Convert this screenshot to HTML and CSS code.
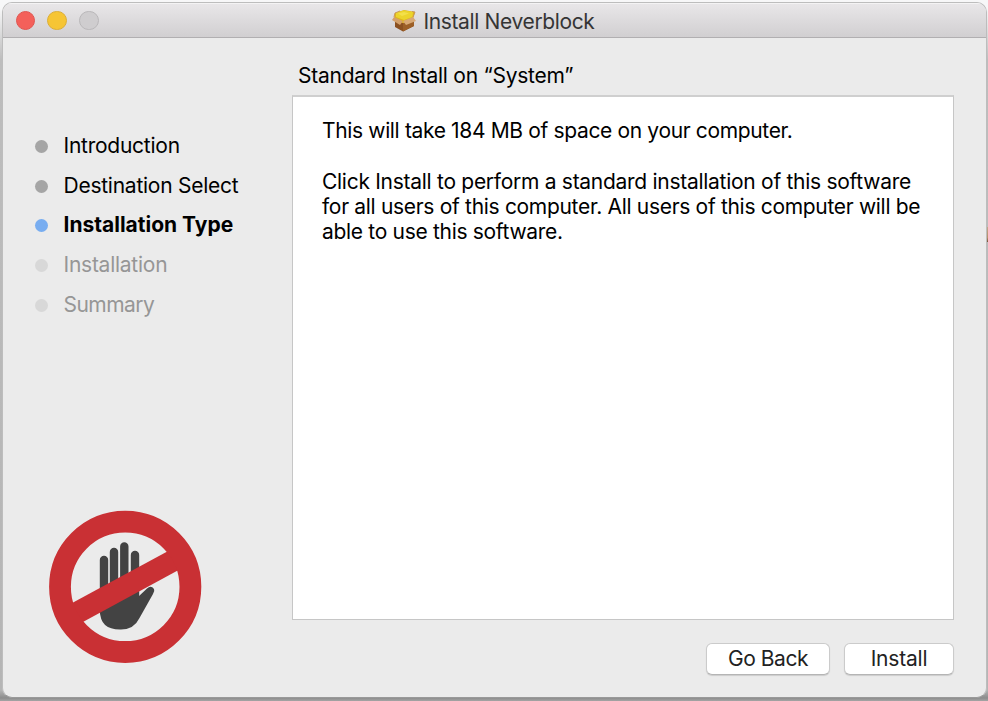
FILE: index.html
```html
<!DOCTYPE html>
<html lang="en">
<head>
<meta charset="utf-8">
<title>Install Neverblock</title>
<link rel="stylesheet" href="styles.css">
</head>
<body>
<main class="window">
  <header class="titlebar">
    <div class="lights"><i class="light close"></i><i class="light minimize"></i><i class="light disabled"></i></div>
    <h1 class="title">
      <svg class="package" width="24" height="23" viewBox="0 0 24 23">
        <path d="M3 11 12 14 22 10V17L11 22.500 3 18Z" fill="#8b5020"/>
        <path d="M11 14 22 10V17L11 22.500Z" fill="#9c5f27"/>
        <path d="M3 4 12 1 23 3 21 10 11 14 2 10Z" fill="#dfb519"/>
        <path d="M4 3.500 12 1.500 21 3 20.500 8 12 11 4 8Z" fill="#ecd42c"/>
        <path d="M6 4.500 12 3 17 4.500 10 7Z" fill="#f3e04a"/>
        <path d="M2 8 11 12 8 16 0 11Z" fill="#d3a06a"/>
        <path d="M11 12 21 8 24 12 14 16Z" fill="#d8a875"/>
        <path d="M21 8 23 3 20 2.500M2 8 3 4 8 2" fill="none" stroke="#c9985b"/>
      </svg>
      <span>Install Neverblock</span>
    </h1>
  </header>
  <div class="content">
    <aside class="sidebar">
      <ol class="steps">
        <li class="done"><span>Introduction</span></li>
        <li class="done"><span>Destination Select</span></li>
        <li class="current"><span>Installation Type</span></li>
        <li class="pending"><span>Installation</span></li>
        <li class="pending summary"><span>Summary</span></li>
      </ol>
      <svg class="logo" width="154" height="154" viewBox="48 510 154 154">
        <g stroke="#434343" stroke-width="8.400" stroke-linecap="round" fill="none">
          <path d="M104 560V612M114 552V608M124.300 546.500V608M135 555V608"/>
        </g>
        <path d="M100 592H138V597L147 588.500Q151 585 154 589Q155 591 153 594L139.500 618Q134 629.500 121 629.500Q100 630 100 611Z" fill="#434343"/>
        <path d="M69 617.100 184 554.700" stroke="#c93034" stroke-width="21.700"/>
        <circle cx="125.200" cy="586.800" r="65.200" fill="none" stroke="#c93034" stroke-width="21.800"/>
      </svg>
    </aside>
    <section class="main">
      <h2 class="heading">Standard Install on “System”</h2>
      <div class="panel">
        <p class="size">This will take 184 MB of space on your computer.</p>
        <p><span class="line1">Click Install to perform a standard installation of this software</span><br><span class="line2">for all users of this computer. All users of this computer will be</span><br><span class="line3">able to use this software.</span></p>
      </div>
      <footer class="actions">
        <button class="back">Go Back</button>
        <button class="install">Install</button>
      </footer>
    </section>
  </div>
</main>
</body>
</html>
```

FILE: styles.css
```css
* { box-sizing: border-box; }
body {
  margin: 0;
  height: 701px;
  padding: 2px 1px 3px 2px;
  overflow: hidden;
  background:
    linear-gradient(#c0a58a, #b58f6c 70%, #75543b) right 227px / 2px 15px no-repeat,
    linear-gradient(#f7f7f8 0, #f7f7f8 8px, #bdbdbd 60px, #b5b5b5 690px, #8c8c8c 698px, #a5a5a5 701px);
  font-family: Inter, "Liberation Sans", sans-serif;
  font-size: 21px;
  letter-spacing: -0.25px;
  color: #000;
}
.window {
  height: 696px;
  border: 1px solid #bdbdbd;
  border-bottom-color: #999;
  border-radius: 10px;
  background: #ebebeb;
  overflow: hidden;
  display: flex;
  flex-direction: column;
}
.titlebar {
  height: 35px;
  flex: none;
  border-bottom: 1px solid #b1afb1;
  background: linear-gradient(#e9e7e9, #d1cfd1);
  box-shadow: inset 0 1px #f4f3f4;
  display: grid;
  grid-template-columns: 1fr auto 1fr;
  align-items: center;
}
.lights { display: flex; gap: 12.300px; padding: 1px 0 0 12.500px; }
.light { width: 19.500px; height: 19.500px; border-radius: 50%; border: 1px solid; }
.close { background: #f4605a; border-color: #df5651; }
.minimize { background: #f6c534; border-color: #dcae37; }
.disabled { background: #cfcdcf; border-color: #b9b7b9; }
.title { display: flex; align-items: center; gap: 7px; margin: 2px 2px 0 0; font-size: 21px; font-weight: 400; letter-spacing: -0.36px; color: #353535; }
.package { display: block; margin-top: -1px; }
.content { flex: 1; display: flex; }
.sidebar {
  width: 289px;
  flex: none;
  display: flex;
  flex-direction: column;
  justify-content: space-between;
  padding: 87px 0 33px 32px;
}
.steps { list-style: none; margin: 0; padding: 0; }
.steps li { display: flex; align-items: center; height: 39.700px; }
.steps li::before { content: ""; width: 13px; height: 13px; margin: 3px 15.500px 0 0; border-radius: 50%; background: #a5a5a5; }
.steps span { padding-top: 1px; }
.steps .current { font-weight: 700; letter-spacing: 0; }
.steps .current::before { background: #78adf0; }
.steps .pending { color: #969696; }
.steps .pending::before { background: #d8d8d8; }
.steps .summary { letter-spacing: -0.55px; }
.logo { margin-left: 13px; }
.main { flex: 1; padding: 21px 32px 0 0; }
.heading { margin: 0 0 2px 6px; height: 34px; line-height: 34px; font-size: 21px; font-weight: 400; }
.panel { height: 525px; padding: 21px 29px; background: #fff; border: 1px solid #c6c6c6; border-width: 2px 1px 1px; border-color: #cfcfcf #c6c6c6 #c6c6c6; }
.panel p { margin: 0 0 25.300px; line-height: 25.300px; white-space: nowrap; }
.size { letter-spacing: -0.35px; }
.line1 { letter-spacing: -0.28px; }
.line2, .line3 { letter-spacing: -0.31px; }
.actions { display: flex; justify-content: flex-end; gap: 14px; margin-top: 23px; }
button { height: 32px; padding: 0 0 2px; border: 1px solid #cbcbcb; border-bottom-color: #b5b5b5; border-radius: 6px; background: #fff; box-shadow: 0 1px 1px #0002; font: inherit; letter-spacing: -0.2px; color: #222; }
.back { width: 124px; letter-spacing: -0.45px; }
.install { width: 110px; }
```
